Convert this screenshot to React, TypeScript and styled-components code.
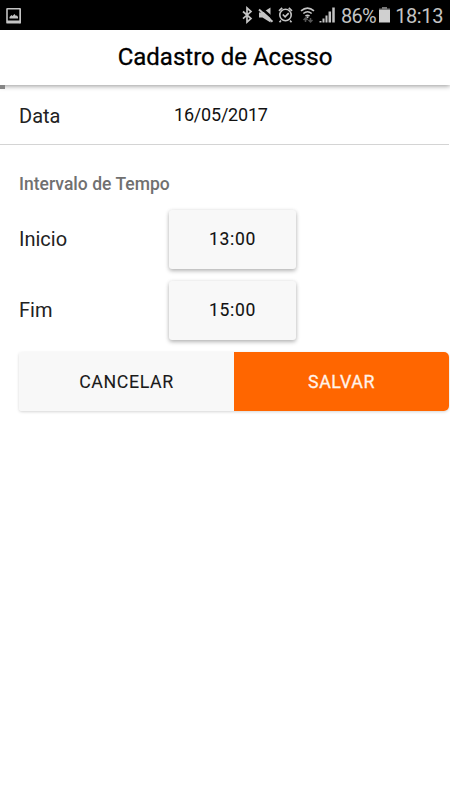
import React from "react";
import styled, { createGlobalStyle } from "styled-components";

const GlobalStyle = createGlobalStyle`
  * { box-sizing: border-box; }
  html, body { margin: 0; background: #fff; overflow: hidden; }
  body, button { font-family: Roboto, "Liberation Sans", sans-serif; }
`;

const Screen = styled.div`
  width: 450px;
  height: 800px;
  display: flex;
  flex-direction: column;
  background: #fff;
  color: #111;
  overflow: hidden;
`;

const StatusBar = styled.div`
  flex: none;
  height: 30px;
  padding: 0 7px 0 6px;
  display: flex;
  align-items: center;
  justify-content: space-between;
  background: #000;
  color: #c4c4c4;
`;

const StatusIcons = styled.div`
  display: flex;
  align-items: center;
  height: 30px;

  svg { display: block; flex: none; }
`;

const StatusText = styled.span<{ $width: number; $spacing?: number; $align?: string }>`
  width: ${(p) => p.$width}px;
  font-size: 20px;
  line-height: 30px;
  letter-spacing: ${(p) => p.$spacing ?? 0}px;
  white-space: nowrap;
  text-align: ${(p) => p.$align ?? "left"};
  padding-top: 2px;
`;

const Header = styled.header`
  flex: none;
  position: relative;
  height: 55px;
  display: flex;
  align-items: center;
  justify-content: center;
  background: #fff;
  box-shadow: 0 1px 5px rgba(0, 0, 0, 0.42);
`;

const Title = styled.h1`
  margin: 0 0 2px;
  font-size: 24px;
  line-height: 52px;
  font-weight: 400;
  -webkit-text-stroke: 0.3px #000;
  color: #000;
  white-space: nowrap;
`;

const ScrollMark = styled.i`
  position: absolute;
  left: 0;
  top: 55px;
  width: 5px;
  height: 4px;
  background: #858585;
`;

const DateRow = styled.div`
  flex: none;
  height: 60px;
  margin-right: 1px;
  padding: 1px 0 0 19px;
  display: flex;
  align-items: center;
  border-bottom: 1px solid #d4d4d4;
`;

const Label = styled.span<{ $width: number }>`
  width: ${(p) => p.$width}px;
  font-size: 20px;
  line-height: 24px;
  color: #222;

  ${DateRow} & { padding-top: 2px; }
`;

const DateValue = styled.span`
  font-size: 18px;
  line-height: 24px;
  letter-spacing: -0.2px;
`;

const SectionTitle = styled.h2`
  margin: 28px 0 0 19px;
  font-size: 17.5px;
  line-height: 22px;
  font-weight: 500;
  letter-spacing: 0.02px;
  color: #707070;
`;

const TimeRow = styled.div<{ $gap: number }>`
  margin-top: ${(p) => p.$gap}px;
  padding-left: 19px;
  height: 59px;
  display: flex;
  align-items: center;

  ${Label} { padding-bottom: 2px; line-height: 22px; }
`;

const TimeButton = styled.button`
  width: 127px;
  height: 59px;
  padding: 0 0 2px;
  border: 0;
  border-radius: 3px;
  background: #f8f8f8;
  color: #111;
  font-size: 17.5px;
  font-weight: 400;
  -webkit-text-stroke: 0.12px #111;
  letter-spacing: 0.7px;
  box-shadow: 0 2px 4px rgba(0, 0, 0, 0.28), 0 0 4px rgba(0, 0, 0, 0.06);
`;

const Actions = styled.div`
  margin: 12px 1px 0 19px;
  height: 59px;
  display: flex;
  border-radius: 3px 5px 5px 3px;
  box-shadow: 0 1px 3px rgba(0, 0, 0, 0.17);
`;

const ActionButton = styled.button<{ $primary?: boolean }>`
  flex: 1;
  padding: 0;
  border: 0;
  border-radius: ${(p) => (p.$primary ? "0 5px 5px 0" : "3px 0 0 3px")};
  background: ${(p) => (p.$primary ? "#ff6600" : "#f8f8f8")};
  color: ${(p) => (p.$primary ? "#fff3ea" : "#1a1a1a")};
  font-size: 17.8px;
  font-weight: 400;
  -webkit-text-stroke: ${(p) => (p.$primary ? "0.3px #fff3ea" : "0.1px #1a1a1a")};
  letter-spacing: 0.6px;
`;

const PictureIcon = () => (
  <svg width="15" height="17" viewBox="0 -1 15 17">
    <path fillRule="evenodd" fill="#c4c4c4" d="M1.5 0h12A1.3 1.3 0 0 1 15 1.5v12.7a1.3 1.3 0 0 1-1.5 1.4h-12A1.3 1.3 0 0 1 .2 14.200V1.500A1.300 1.300 0 0 1 1.500 0ZM1.800 1.500v11h11.500v-11Z" />
    <path fill="#c4c4c4" d="M3.500 10.500V9l2-2 1 1L8.500 6l1.500 2 .800-.800L12 9v1.500Z" />
  </svg>
);

const PhoneIcons = () => (
  <svg width="105" height="30" viewBox="236 0 105 30" fill="none" stroke="#c4c4c4">
    <path strokeWidth="1.700" d="m243 11.500 8 7-4 3.600V8l4 3.600-8 7" />
    <path fill="#c4c4c4" stroke="none" d="M259 12.500h3.500l8-5v15l-8-5H259Z" />
    <path stroke="#000" strokeWidth="2.500" d="m260.500 7.500 13 11.500" />
    <path strokeWidth="2" d="m259 9.500 13.500 12.300" />
    <circle cx="285.500" cy="15" r="5.700" strokeWidth="1.600" />
    <path strokeWidth="1.700" d="m279 10.800 3.200-3M292 10.800l-3.200-3M281 20.500l-1.500 1.700M290 20.500l1.500 1.700M282.800 14.500l2.300 2.300 3.600-3.700" />
    <path strokeWidth="1.600" d="M301 10.800q6.500-5.500 13 0M303.300 13.500q4.200-3.500 8.400 0M305.500 16q2-1.500 4 0" />
    <circle cx="307.500" cy="17.300" r="1" fill="#c4c4c4" stroke="none" />
    <path stroke="#555" strokeWidth="1.500" d="M305.500 22v-4m-2 2 2-2 2 2M310.500 18v4m-2-2 2 2 2-2" />
    <path strokeWidth="2" d="M320.500 22.500v-1.500M323.500 22.500v-4M326.500 22.500v-7" />
    <path strokeWidth="2.500" d="M329.800 22.500v-11M333.500 22.500v-15" />
  </svg>
);

const BatteryIcon = () => (
  <svg width="11" height="16" viewBox="0 0 11 16">
    <path fill="#777" d="M3 0h5v1.500h3V4H0V1.500h3Z" />
    <path fill="#d0d0d0" d="M0 3h11v12.500H0Z" />
  </svg>
);

export default function App() {
  return (
    <>
      <GlobalStyle />
      <Screen>
        <StatusBar>
          <StatusIcons>
            <PictureIcon />
          </StatusIcons>
          <StatusIcons>
            <PhoneIcons />
            <StatusText $width={38} $spacing={-0.7}>86%</StatusText>
            <BatteryIcon />
            <StatusText $width={53} $spacing={-0.4} $align="right">18:13</StatusText>
          </StatusIcons>
        </StatusBar>
        <Header>
          <Title>Cadastro de Acesso</Title>
          <ScrollMark />
        </Header>
        <DateRow>
          <Label $width={155}>Data</Label>
          <DateValue>16/05/2017</DateValue>
        </DateRow>
        <SectionTitle>Intervalo de Tempo</SectionTitle>
        <TimeRow $gap={15}>
          <Label $width={150}>Inicio</Label>
          <TimeButton>13:00</TimeButton>
        </TimeRow>
        <TimeRow $gap={12}>
          <Label $width={150}>Fim</Label>
          <TimeButton>15:00</TimeButton>
        </TimeRow>
        <Actions>
          <ActionButton>CANCELAR</ActionButton>
          <ActionButton $primary>SALVAR</ActionButton>
        </Actions>
      </Screen>
    </>
  );
}
